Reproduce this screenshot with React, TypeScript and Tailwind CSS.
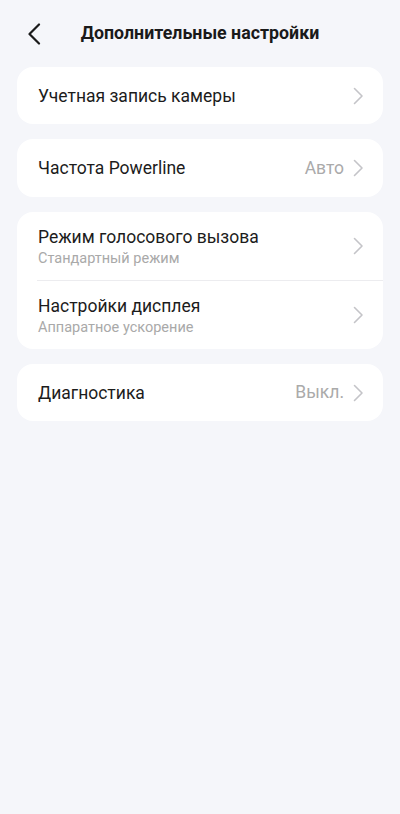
import React from 'react';

interface RowProps {
  title: string;
  value?: string;
  tall?: boolean;
}

const Chevron = () => (
  <svg className="w-[12px] h-[18px] text-[#c4c4c8]" viewBox="0 0 12 18" fill="none" stroke="currentColor">
    <path d="M2.5 1.5l7.5 7.5-7.5 7.5" strokeWidth={1.6} strokeLinecap="round" strokeLinejoin="round" />
  </svg>
);

const Row: React.FC<RowProps> = ({ title, value, tall }) => (
  <div className={`flex items-center pl-[21px] pr-[19px] ${tall ? 'h-[58px]' : 'h-[57px]'}`}>
    <span className="flex-1 text-[17.5px] leading-[22px] text-[#1c1c1c]">{title}</span>
    {value && <span className="text-[17.5px] text-[#aaaaaa] mr-[8px]">{value}</span>}
    <Chevron />
  </div>
);

const SubRow: React.FC<{ title: string; subtitle: string }> = ({ title, subtitle }) => (
  <div className="h-[68px] flex items-center pl-[21px] pr-[19px]">
    <div className="flex-1 flex flex-col pt-[2px]">
      <span className="text-[17.5px] leading-[22px] text-[#1c1c1c]">{title}</span>
      <span className="text-[14.5px] leading-[21px] text-[#a9a9a9]">{subtitle}</span>
    </div>
    <Chevron />
  </div>
);

export default function App() {
  return (
    <div
      className="w-[400px] min-h-[814px] bg-[#f5f6fa] flex flex-col"
      style={{ fontFamily: 'Roboto, "Noto Sans", sans-serif' }}
    >
      {/* Header */}
      <div className="h-[67px] flex items-center relative">
        <button className="ml-[26px] w-[16px] h-[24px] flex items-center justify-center">
          <svg className="w-[14px] h-[22px] text-[#1a1a1a]" viewBox="0 0 14 22" fill="none" stroke="currentColor">
            <path d="M12 1.5L2.5 11 12 20.5" strokeWidth={2.2} strokeLinecap="round" strokeLinejoin="round" />
          </svg>
        </button>
        <h1 className="absolute left-0 right-0 text-center text-[17.8px] font-bold text-[#1a1a1a] pointer-events-none">
          Дополнительные настройки
        </h1>
      </div>

      <div className="flex flex-col gap-[15px] px-[17px]">
        <div className="bg-white rounded-[16px]">
          <Row title="Учетная запись камеры" />
        </div>
        <div className="bg-white rounded-[16px]">
          <Row title="Частота Powerline" value="Авто" tall />
        </div>
        <div className="bg-white rounded-[16px] flex flex-col">
          <SubRow title="Режим голосового вызова" subtitle="Стандартный режим" />
          <div className="ml-[20px] h-px bg-[#ececef]" />
          <SubRow title="Настройки дисплея" subtitle="Аппаратное ускорение" />
        </div>
        <div className="bg-white rounded-[16px]">
          <Row title="Диагностика" value="Выкл." />
        </div>
      </div>
    </div>
  );
}
